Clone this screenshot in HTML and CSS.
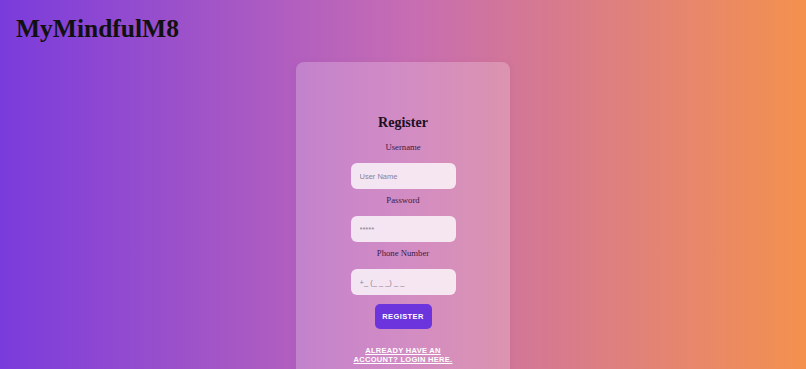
FILE: index.html
```html
<!DOCTYPE html>
<html lang="en">
<head>
    <meta charset="UTF-8">
    <meta name="viewport" content="width=device-width, initial-scale=1.0">
    <title>MyMindfulM8 - Register</title>
    <link rel="stylesheet" href="styles.css">
</head>
<body>
    <h1 class="site-title">MyMindfulM8</h1>

    <div class="card">
        <h2>Register</h2>
        <form id="registerForm" class="register-form">
            <label for="username">Username</label>
            <input type="text" id="username" name="username" placeholder="User Name">

            <label for="password">Password</label>
            <input type="password" id="password" name="password" placeholder="*****">

            <label for="phone">Phone Number</label>
            <input type="tel" id="phone" name="phone" placeholder="+_ (_ _ _) _ _">

            <button type="submit">Register</button>
        </form>
        <a class="login-link" href="#">Already have an account? Login here.</a>
    </div>
</body>
</html>
```

FILE: styles.css
```css
body {
    font-family: "Liberation Serif", "Times New Roman", serif;
    margin: 0;
    padding: 0;
    min-height: 100vh;
    background: linear-gradient(to right, #7a3bdc 0%, #c66cb4 50%, #f4914e 100%);
    overflow: hidden;
}

.site-title {
    margin: 0;
    padding: 12px 16px 0;
    font-size: 25.5px;
    line-height: 34px;
    color: #111;
}

.card {
    width: 214px;
    margin: 16px auto 0;
    padding: 52px 0 40px;
    background: rgba(255, 255, 255, 0.22);
    border-radius: 8px;
    box-shadow: 0 2px 10px rgba(0, 0, 0, 0.05);
    text-align: center;
}

h2 {
    margin: 0 0 10px;
    font-size: 14px;
    line-height: 18px;
    color: #1d0f22;
}

.register-form {
    display: flex;
    flex-direction: column;
    align-items: center;
}

label {
    display: block;
    font-size: 8.7px;
    line-height: 11px;
    color: #3b1a46;
    margin-bottom: 10px;
}

input {
    width: 105px;
    height: 26px;
    padding: 0 9px;
    margin-bottom: 6px;
    border: none;
    border-radius: 6px;
    background: rgba(255, 255, 255, 0.78);
    font-family: "Liberation Sans", Arial, sans-serif;
    font-size: 7.5px;
    box-sizing: border-box;
    outline: none;
}

input::placeholder {
    color: #8d808f;
}

button {
    margin-top: 3px;
    width: 57px;
    height: 25px;
    border: none;
    border-radius: 5px;
    background-color: #6b34dc;
    color: #fff;
    font-family: "Liberation Sans", Arial, sans-serif;
    font-weight: bold;
    font-size: 7.5px;
    letter-spacing: 0.4px;
    text-transform: uppercase;
    cursor: pointer;
}

.login-link {
    display: block;
    width: 110px;
    margin: 17px auto 0;
    font-family: "Liberation Sans", Arial, sans-serif;
    font-weight: bold;
    font-size: 7.5px;
    line-height: 9px;
    letter-spacing: 0.3px;
    color: #fff;
    text-transform: uppercase;
}
```
